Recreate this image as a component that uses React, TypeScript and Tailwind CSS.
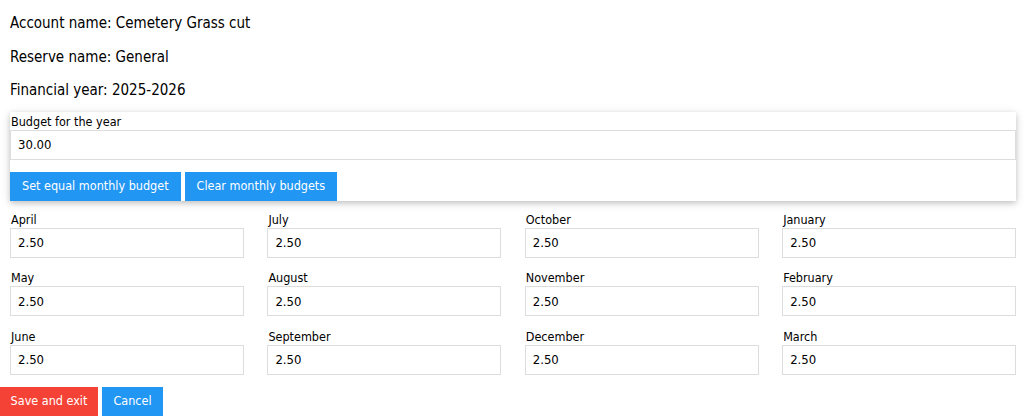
import React from "react";

const months = [
  ["April", "May", "June"],
  ["July", "August", "September"],
  ["October", "November", "December"],
  ["January", "February", "March"],
];

function MonthField({ name }: { name: string }) {
  return (
    <div className="flex flex-col">
      <label className="text-[12.5px] leading-[16px] text-black pl-[1px]">{name}</label>
      <input
        className="h-[30px] w-full border border-[#ddd] px-[7px] text-[13px] text-black outline-none"
        defaultValue="2.50"
      />
    </div>
  );
}

export default function App() {
  return (
    <div className="min-h-screen bg-white text-black font-['DejaVu_Sans_Condensed','DejaVu_Sans',Verdana,sans-serif]">
      <div className="pl-[10px] pr-[8px]">
        {/* Heading lines */}
        <div className="pt-[12px] text-[15px] leading-[22px] space-y-[11.5px]">
          <p>Account name: Cemetery Grass cut</p>
          <p>Reserve name: General</p>
          <p>Financial year: 2025-2026</p>
        </div>

        {/* Budget card */}
        <div className="mt-[10.5px] bg-white shadow-[0_2px_5px_0_rgba(0,0,0,0.16),0_2px_10px_0_rgba(0,0,0,0.12)]">
          <div className="pt-[2px] pl-[1px] text-[12.5px] leading-[16px]">Budget for the year</div>
          <input
            className="h-[30px] w-full border border-[#ddd] px-[7px] text-[13px] text-black outline-none"
            defaultValue="30.00"
          />
          <div className="mt-[12px] flex gap-[4px]">
            <button className="h-[29px] bg-[#2196F3] px-[12px] text-[12.5px] text-white">
              Set equal monthly budget
            </button>
            <button className="h-[29px] bg-[#2196F3] px-[12px] text-[12.5px] text-white">
              Clear monthly budgets
            </button>
          </div>
        </div>

        {/* Monthly grid */}
        <div className="mt-[11px] grid grid-cols-4 gap-x-[23.5px]">
          {months.map((col, i) => (
            <div key={i} className="flex flex-col gap-[12.5px]">
              {col.map((m) => (
                <MonthField key={m} name={m} />
              ))}
            </div>
          ))}
        </div>
      </div>

      {/* Footer buttons */}
      <div className="mt-[12px] flex gap-[4px]">
        <button className="h-[29px] w-[98px] bg-[#f44336] text-[12.5px] text-white">Save and exit</button>
        <button className="h-[29px] w-[61px] bg-[#2196F3] text-[12.5px] text-white">Cancel</button>
      </div>
    </div>
  );
}
